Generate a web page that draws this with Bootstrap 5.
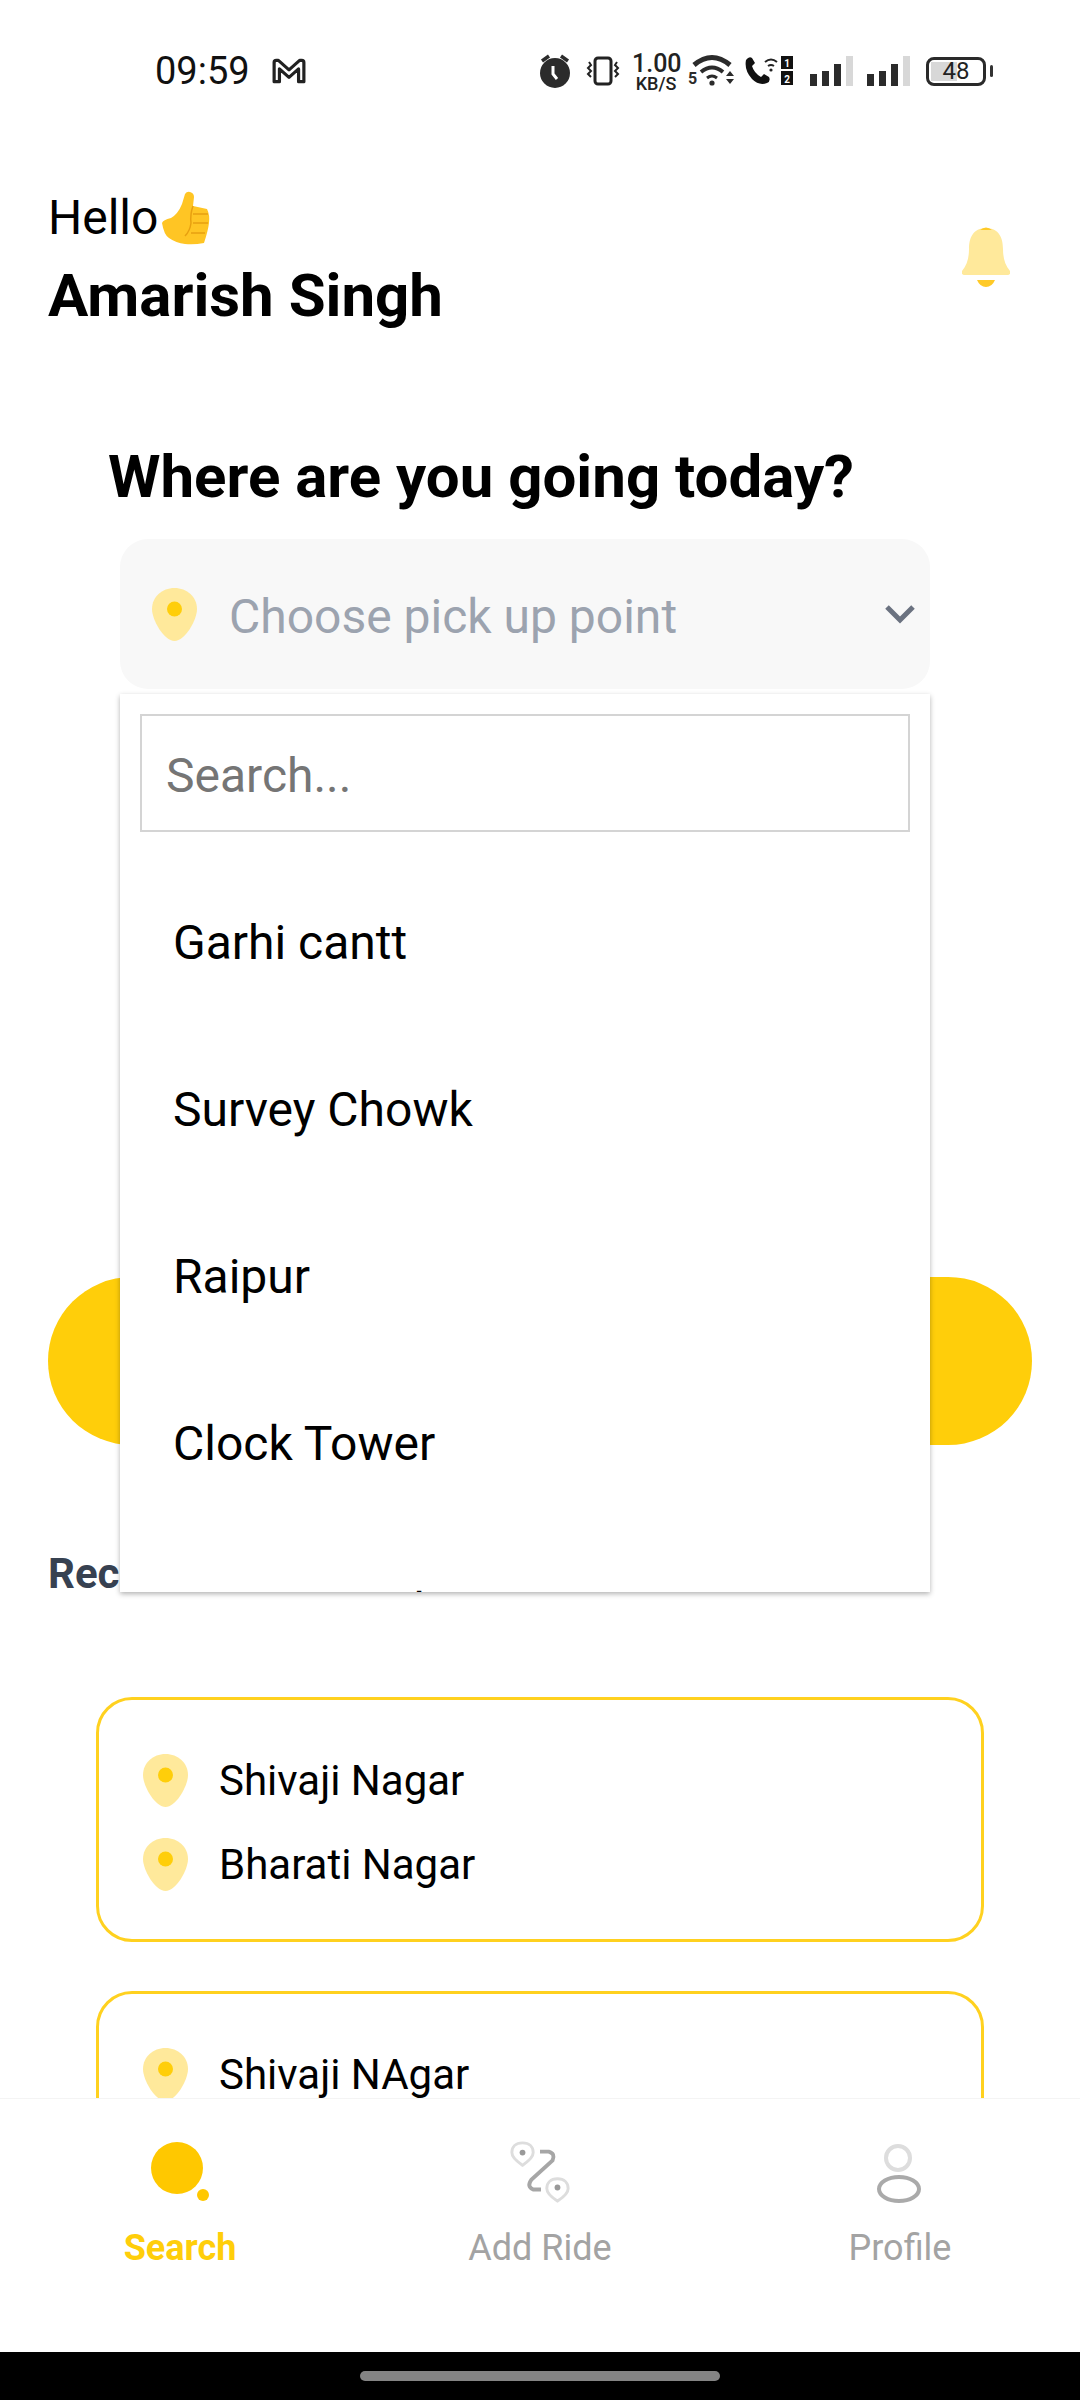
<!DOCTYPE html>
<html lang="en">
<head>
  <meta charset="UTF-8">
  <title>Where are you going today?</title>
  <link href="https://cdn.jsdelivr.net/npm/bootstrap@5.3.0/dist/css/bootstrap.min.css" rel="stylesheet">
  <style>
    body {
      margin: 0;
      background-color: #fff;
      font-family: Roboto, "Liberation Sans", sans-serif;
      color: #000;
    }

    .phone-screen {
      width: 1080px;
      height: 2400px;
      overflow: hidden;
      background-color: #fff;
    }

    /* status bar */
    .status-strip {
      height: 142px;
      padding: 0 87px 0 155px;
    }
    .status-time {
      font-size: 38px;
      line-height: 1;
      color: #111;
      margin-right: 22px;
    }
    .alarm-icon {
      margin-right: 13px;
    }
    .speed-box {
      width: 48px;
      margin: 2px 8px 0 12px;
      color: #222;
      text-align: center;
      font-weight: 500;
    }
    .speed-top { font-size: 25px; line-height: 20px; }
    .speed-unit { font-size: 18px; line-height: 14px; margin-top: 3px; }
    .battery-box {
      width: 60px;
      height: 29px;
      border: 3px solid #2a2a2a;
      border-radius: 8px;
      padding: 2px;
      font-size: 24px;
      line-height: 19px;
      color: #222;
      text-align: center;
      background: linear-gradient(90deg, #d8d8d8 0, #d8d8d8 26px, transparent 26px) no-repeat 2px 2px / 100% 19px;
    }
    .battery-nub {
      width: 3px;
      height: 12px;
      margin-left: 4px;
      background-color: #333;
      border-radius: 2px;
    }

    /* greeting */
    .greeting-block {
      padding: 48px 48px 0;
    }
    .hello-line {
      font-size: 48px;
      line-height: 56px;
    }
    .user-name {
      font-size: 60px;
      font-weight: 700;
      line-height: 68px;
      margin: 16px 0 0;
    }
    .bell-icon {
      margin: 35px 22px 0 0;
    }

    /* ride search */
    .going-title {
      font-size: 60px;
      font-weight: 700;
      line-height: 64px;
      margin: 115px 0 30px 108px;
    }
    .pick-select {
      width: 810px;
      height: 150px;
      margin-left: 120px;
      padding: 0 14px 0 32px;
      background-color: #f8f8f8;
      border-radius: 28px;
    }
    .pick-label {
      font-size: 48px;
      color: #9ca3af;
      margin: 5px 0 0 32px;
    }
    .find-btn {
      display: block;
      width: 984px;
      height: 168px;
      margin: 588px 0 0 48px;
      background-color: #ffce0a;
      border: 0;
      border-radius: 84px;
      font-size: 48px;
      font-weight: 700;
      color: #fff;
    }
    .recent-title {
      font-size: 42px;
      font-weight: 700;
      line-height: 48px;
      color: #374151;
      margin: 105px 0 99px 48px;
    }
    .ride-box {
      width: 888px;
      height: 245px;
      margin: 0 0 49px 96px;
      padding: 38px 0 0 44px;
      border: 3px solid #ffd11f;
      border-radius: 36px;
    }
    .ride-stop {
      height: 84px;
      font-size: 42px;
    }
    .ride-stop span {
      margin-left: 31px;
    }
    .pin-small {
      width: 45px;
      height: 53px;
      flex: none;
    }

    /* pick up dropdown, lies over the form */
    .pick-menu {
      top: 694px;
      left: 120px;
      width: 810px;
      height: 898px;
      overflow: hidden;
      background-color: #fff;
      box-shadow: 0 2px 5px rgba(0, 0, 0, .3);
      padding: 20px;
    }
    .pick-search {
      height: 118px;
      border: 2px solid #d4d4d4;
      border-radius: 0;
      font-size: 48px;
      padding: 5px 24px 0;
      color: #222;
    }
    .pick-search::placeholder {
      color: #757575;
    }
    .pick-list {
      margin: 27px -20px 0;
    }
    .pick-list .list-group-item {
      height: 167px;
      padding: 0 0 0 53px;
      border: 0;
      font-size: 48px;
      color: #000;
      display: flex;
      align-items: center;
    }

    /* bottom tabs */
    .tab-strip {
      left: 0;
      right: 0;
      bottom: 48px;
      height: 254px;
      margin: 0;
      background-color: #fff;
      border-top: 1px solid #f4f4f4;
    }
    .tab-item {
      padding-top: 40px;
      text-align: center;
      font-size: 36px;
      line-height: 44px;
      color: #a3a3a3;
    }
    .tab-item svg {
      display: block;
      margin: 0 auto 21px;
    }
    .tab-active {
      color: #ffce0a;
      font-weight: 700;
    }
    .gesture-strip {
      left: 0;
      right: 0;
      bottom: 0;
      height: 48px;
      background-color: #000;
    }
    .gesture-handle {
      width: 360px;
      height: 10px;
      background-color: #848484;
      border-radius: 5px;
    }
  </style>
</head>
<body>
  <div class="phone-screen position-relative">

    <div class="status-strip d-flex align-items-center">
      <span class="status-time">09:59</span>
      <svg width="34" height="26" viewBox="0 0 32 24" fill="none" stroke="#222" stroke-width="3" stroke-linejoin="round">
        <path d="M2 22V4q0-2 2-2h2l10 9 10-9h2q2 0 2 2v18h-5V10l-9 8-9-8v12z"/>
      </svg>

      <div class="d-flex align-items-center ms-auto">
        <svg class="alarm-icon" width="36" height="36" viewBox="0 0 36 36">
          <circle cx="18" cy="20" r="15" fill="#2b2b2b"/>
          <path d="M5 8l7-5M31 8l-7-5" stroke="#2b2b2b" stroke-width="3.5" fill="none"/>
          <path d="M16 13v8l4 5" stroke="#fff" stroke-width="3" fill="none"/>
        </svg>
        <svg width="34" height="30" viewBox="0 0 34 30" fill="none" stroke="#222">
          <rect x="9" y="2" width="16" height="26" rx="3" stroke-width="3"/>
          <path d="M3 6l2 3-3 3 3 3-3 3 3 3M31 6l-2 3 3 3-3 3 3 3-3 3" stroke-width="2"/>
        </svg>
        <div class="speed-box">
          <div class="speed-top">1.00</div>
          <div class="speed-unit">KB/S</div>
        </div>
        <svg width="48" height="34" viewBox="0 0 48 34" class="me-2">
          <path d="M6 11q18-15 36 0" stroke="#2b2b2b" stroke-width="5" fill="none"/>
          <path d="M13 18q11-9 22 0" stroke="#2b2b2b" stroke-width="4" fill="none"/>
          <path d="M19 24q5-4 10 0" stroke="#2b2b2b" stroke-width="3" fill="none"/>
          <circle cx="24" cy="29" r="2.6" fill="#2b2b2b"/>
          <path d="M38 22l4-5 4 5zM38 25l4 5 4-5z" fill="#2b2b2b"/>
          <text x="0" y="30" font-size="16" font-weight="700" fill="#2b2b2b" font-family="Roboto, sans-serif">5</text>
        </svg>
        <svg width="50" height="30" viewBox="0 0 50 30" class="me-3">
          <path d="M2 4q3-4 6-2l3 5-3 3q2 7 9 11l3-3 5 3q2 4-2 6-8 3-15-4Q0 14 2 4z" fill="#111"/>
          <path d="M21 6q6-5 12 0M24 10q3-2 6 0" stroke="#222" stroke-width="2" fill="none"/>
          <circle cx="27" cy="14" r="1.6" fill="#222"/>
          <rect x="37" y="0" width="12" height="13" fill="#111"/>
          <rect x="37" y="15" width="12" height="14" fill="#111"/>
          <text x="43" y="11" font-size="10" font-weight="700" text-anchor="middle" fill="#fff" font-family="Roboto, sans-serif">1</text>
          <text x="43" y="26.500" font-size="10" font-weight="700" text-anchor="middle" fill="#fff" font-family="Roboto, sans-serif">2</text>
        </svg>
        <svg width="43" height="30" viewBox="0 0 43 30" style="margin-right:14px">
          <rect x="0" y="18" width="7" height="12" fill="#2b2b2b"/>
          <rect x="12" y="15" width="7" height="15" fill="#2b2b2b"/>
          <rect x="24" y="8" width="7" height="22" fill="#2b2b2b"/>
          <rect x="36" y="0" width="7" height="30" fill="#d8d8d8"/>
        </svg>
        <svg width="43" height="30" viewBox="0 0 43 30" style="margin-right:16px">
          <rect x="0" y="18" width="7" height="12" fill="#2b2b2b"/>
          <rect x="12" y="15" width="7" height="15" fill="#2b2b2b"/>
          <rect x="24" y="8" width="7" height="22" fill="#2b2b2b"/>
          <rect x="36" y="0" width="7" height="30" fill="#d8d8d8"/>
        </svg>
        <div class="battery-box">48</div>
        <div class="battery-nub"></div>
      </div>
    </div>

    <div class="greeting-block d-flex justify-content-between align-items-start">
      <div>
        <div class="hello-line d-flex align-items-center">Hello
          <svg width="48" height="54" viewBox="0 0 48 54" class="ms-1">
            <path d="M0 32q1-3 9-5 7-4 11-14l3-10q2-3 5-2 4 1 4 5l-1 9 14 3q3 6 2 14-1 8-5 20-10 2-19 1-9-1-16-6-5-3-7-15z" fill="#ffc524"/>
            <path d="M31 23h15M31 32h15M29 42h14M31 15q-3 8-2 17-1 8-6 13" stroke="#e8a010" stroke-width="1.500" fill="none"/>
          </svg>
        </div>
        <h1 class="user-name">Amarish Singh</h1>
      </div>
      <svg class="bell-icon" width="48" height="62" viewBox="0 0 48 62">
        <path d="M24 3C11 3 7 13 7 24c0 9-2 16-7 22-1 2 0 4 3 4h42c3 0 4-2 3-4-5-6-7-13-7-22C41 13 37 3 24 3z" fill="#ffe99b"/>
        <path d="M18 5q6-5 12 0zM15 55h18q-3 7-9 7t-9-7z" fill="#ffca28"/>
      </svg>
    </div>

    <h2 class="going-title">Where are you going today?</h2>

    <div class="pick-select d-flex align-items-center">
      <svg class="pin-small" viewBox="0 0 45 53">
        <path d="M22.500 0C35 0 45 9 45 21c0 11-12 32-22.500 32S0 32 0 21C0 9 10 0 22.500 0z" fill="#ffe99b"/>
        <circle cx="22.500" cy="21" r="7.500" fill="#ffce0a"/>
      </svg>
      <span class="pick-label">Choose pick up point</span>
      <svg class="ms-auto" width="32" height="20" viewBox="0 0 32 20">
        <path d="M3 3l13 13L29 3" stroke="#6b7280" stroke-width="5" fill="none"/>
      </svg>
    </div>

    <button class="btn find-btn" type="button">Search</button>

    <h3 class="recent-title">Recent Searches</h3>

    <div class="ride-box">
      <div class="ride-stop d-flex align-items-center">
        <svg class="pin-small" viewBox="0 0 45 53">
          <path d="M22.500 0C35 0 45 9 45 21c0 11-12 32-22.500 32S0 32 0 21C0 9 10 0 22.500 0z" fill="#ffe99b"/>
          <circle cx="22.500" cy="21" r="7.500" fill="#ffce0a"/>
        </svg>
        <span>Shivaji Nagar</span>
      </div>
      <div class="ride-stop d-flex align-items-center">
        <svg class="pin-small" viewBox="0 0 45 53">
          <path d="M22.500 0C35 0 45 9 45 21c0 11-12 32-22.500 32S0 32 0 21C0 9 10 0 22.500 0z" fill="#ffe99b"/>
          <circle cx="22.500" cy="21" r="7.500" fill="#ffce0a"/>
        </svg>
        <span>Bharati Nagar</span>
      </div>
    </div>

    <div class="ride-box">
      <div class="ride-stop d-flex align-items-center">
        <svg class="pin-small" viewBox="0 0 45 53">
          <path d="M22.500 0C35 0 45 9 45 21c0 11-12 32-22.500 32S0 32 0 21C0 9 10 0 22.500 0z" fill="#ffe99b"/>
          <circle cx="22.500" cy="21" r="7.500" fill="#ffce0a"/>
        </svg>
        <span>Shivaji NAgar</span>
      </div>
    </div>

    <div class="pick-menu position-absolute">
      <input class="form-control pick-search" type="text" placeholder="Search...">
      <div class="list-group list-group-flush pick-list">
        <div class="list-group-item">Garhi cantt</div>
        <div class="list-group-item">Survey Chowk</div>
        <div class="list-group-item">Raipur</div>
        <div class="list-group-item">Clock Tower</div>
        <div class="list-group-item">Rispana Pul</div>
      </div>
    </div>

    <div class="tab-strip row g-0 position-absolute">
      <div class="col-4 tab-item tab-active">
        <svg width="60" height="66" viewBox="0 -3 60 66">
          <circle cx="27" cy="26" r="26" fill="#ffc800"/>
          <circle cx="53" cy="53" r="6" fill="#ffc800"/>
        </svg>
        Search
      </div>
      <div class="col-4 tab-item">
        <svg width="68" height="66" viewBox="0 0 70 68">
          <path d="M17 4c7 0 11 4 11 10S20 25 17 27C14 25 6 20 6 14S10 4 17 4z" fill="none" stroke="#ddd" stroke-width="3"/>
          <circle cx="17" cy="14" r="3" fill="#999"/>
          <path d="M35 13h9q7 2 4 9L26 42q-5 7 2 10h8" fill="none" stroke="#a6a6a6" stroke-width="4"/>
          <path d="M53 41c7 0 11 4 11 10s-8 11-11 13c-3-2-11-7-11-13s4-10 11-10z" fill="none" stroke="#ddd" stroke-width="3"/>
          <circle cx="53" cy="50" r="3" fill="#999"/>
        </svg>
        Add Ride
      </div>
      <div class="col-4 tab-item">
        <svg width="60" height="66" viewBox="0 0 60 66">
          <circle cx="28" cy="19" r="12" fill="none" stroke="#ddd" stroke-width="4"/>
          <ellipse cx="29" cy="50" rx="20" ry="12" fill="none" stroke="#aaa" stroke-width="4"/>
        </svg>
        Profile
      </div>
    </div>

    <div class="gesture-strip position-absolute d-flex justify-content-center align-items-center">
      <div class="gesture-handle"></div>
    </div>
  </div>

  <script src="https://cdn.jsdelivr.net/npm/bootstrap@5.3.0/dist/js/bootstrap.bundle.min.js"></script>
</body>
</html>
